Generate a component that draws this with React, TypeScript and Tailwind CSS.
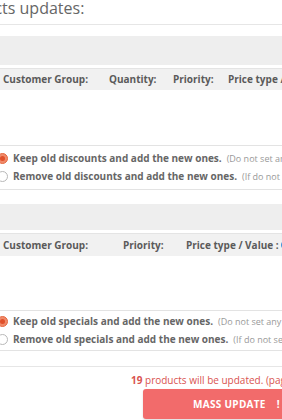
import React from "react";

const font = { fontFamily: '"Open Sans", "Noto Sans", sans-serif' };

function Radio({ checked }: { checked?: boolean }) {
  return checked ? (
    <span className="flex h-[11px] w-[11px] shrink-0 items-center justify-center rounded-full border border-[#e5673f] bg-[#f08a6a]">
      <span className="h-[5px] w-[5px] rounded-full bg-[#e0502a]" />
    </span>
  ) : (
    <span className="h-[11px] w-[11px] shrink-0 rounded-full border border-[#b8b8b8] bg-white" />
  );
}

function Options({ kind, h }: { kind: string; h: string }) {
  return (
    <div className={`flex flex-col justify-center gap-[4px] border-y border-[#e3e3e3] ${h}`}>
      <label className="flex h-[14px] items-center gap-[5px] whitespace-nowrap">
        <Radio checked />
        <span className="text-[10px] font-bold text-[#666]">Keep old {kind} and add the new ones.</span>
        <span className="text-[9px] text-[#999]">(Do not set any new {kind} if you want to keep the old ones)</span>
      </label>
      <label className="flex h-[14px] items-center gap-[5px] whitespace-nowrap">
        <Radio />
        <span className="text-[10px] font-bold text-[#666]">Remove old {kind} and add the new ones.</span>
        <span className="text-[9px] text-[#999]">(If do not set any new {kind}, all old ones will be removed)</span>
      </label>
    </div>
  );
}

export default function App() {
  return (
    <div className="h-[420px] w-[282px] overflow-hidden bg-white" style={font}>
      <div className="-ml-[6px] w-[520px]">
        <div className="-mt-[3px] h-[28px] border-b border-[#e6e6e6] pl-[6px]">
          <h2 className="-ml-[51px] text-[16px] leading-[22px] text-[#666]">Products updates:</h2>
        </div>

        {/* discounts */}
        <div className="mt-[11px] h-[29px] bg-[#eeeeee]" />
        <div className="mt-[3px] grid h-[22px] grid-cols-[106px_64px_55px_auto] items-center border-t border-[#e4e4e4] bg-[#f1f1f1] pl-[9px] text-[10px] font-bold whitespace-nowrap text-[#5a5a5a]">
          <span>Customer Group:</span>
          <span>Quantity:</span>
          <span>Priority:</span>
          <span>Price type / Value :</span>
        </div>
        <div className="h-[55px]" />
        <div className="pl-[3px]">
          <Options kind="discounts" h="h-[45px]" />
        </div>

        {/* specials */}
        <div className="mt-[14px] h-[26px] bg-[#eeeeee]" />
        <div className="mt-[3px] flex h-[23px] items-center border-t border-[#e4e4e4] bg-[#f1f1f1] pl-[9px] text-[10px] font-bold whitespace-nowrap text-[#5a5a5a]">
          <span className="w-[120px]">Customer Group:</span>
          <span className="w-[63px]">Priority:</span>
          <span>Price type / Value :</span>
          <span className="ml-[2px] inline-flex h-[10px] w-[10px] items-center justify-center rounded-full bg-[#3a8fd9] text-[7px] text-white">?</span>
        </div>
        <div className="h-[54px]" />
        <div className="pl-[3px]">
          <Options kind="specials" h="h-[41px]" />
        </div>

        <div className="mt-[15px] border-t border-[#e6e6e6] pt-[6px]">
          <p className="pl-[137px] text-[10px] leading-[14px] whitespace-nowrap text-[#d9534f]">
            <b>19</b> products will be updated. (pages 1 to 1)
          </p>
          <div className="mt-[2px] pl-[149px]">
            <button className="flex h-[30px] w-[200px] items-center rounded-[3px] bg-[#f26b6b] pl-[50px] text-[10px] font-bold tracking-[0.3px] text-white shadow-[0_1px_2px_rgba(0,0,0,0.15)]">
              MASS UPDATE<span className="ml-[11px]">!</span>
            </button>
          </div>
        </div>
      </div>
    </div>
  );
}
